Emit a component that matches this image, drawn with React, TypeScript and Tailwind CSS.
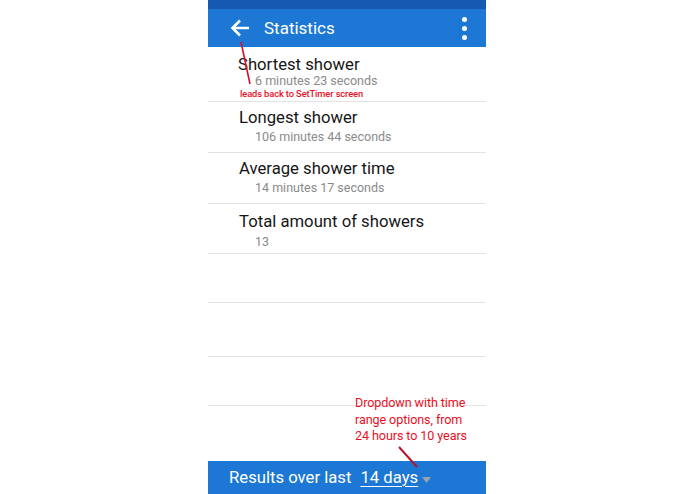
import React from "react";

type Stat = { title: string; value: string; h: number; pt: number; gap: number };

const stats: Stat[] = [
  { title: "Shortest shower", value: "6 minutes 23 seconds", h: 55, pt: 8, gap: -1 },
  { title: "Longest shower", value: "106 minutes 44 seconds", h: 51, pt: 6, gap: 2 },
  { title: "Average shower time", value: "14 minutes 17 seconds", h: 51, pt: 6, gap: 2 },
  { title: "Total amount of showers", value: "13", h: 50, pt: 8, gap: 3 },
];

const emptyRows = [49, 54, 49];

export default function App() {
  return (
    <div
      className="relative w-[695px] h-[494px] bg-white overflow-hidden"
      style={{ fontFamily: "Roboto, 'Noto Sans', sans-serif" }}
    >
      <div className="ml-[208px] w-[278px] h-[494px] flex flex-col">
        {/* status bar */}
        <div className="h-[9px] bg-[#1559b3]" />
        {/* app bar */}
        <div className="h-[38px] bg-[#1c78d4] flex items-center text-white">
          <svg width="20" height="18" viewBox="0 0 20 18" className="ml-[22px]" fill="none">
            <path d="M19 9H2.5M10 1.5L2.5 9l7.5 7.5" stroke="white" strokeWidth="2.6" strokeLinecap="butt" strokeLinejoin="miter" />
          </svg>
          <span className="ml-[14px] text-[17px] leading-none">Statistics</span>
          <div className="ml-auto mr-[19px] flex flex-col gap-[4px]">
            <span className="w-[5px] h-[5px] rounded-full bg-white" />
            <span className="w-[5px] h-[5px] rounded-full bg-white" />
            <span className="w-[5px] h-[5px] rounded-full bg-white" />
          </div>
        </div>

        {stats.map((s, i) => (
          <div
            key={s.title}
            className="border-b border-[#e3e3e3] flex flex-col"
            style={{ height: s.h, paddingTop: s.pt }}
          >
            <div
              className="text-[16.7px] leading-[20px] text-[#161616]"
              style={{ paddingLeft: i === 0 ? 30 : 31 }}
            >
              {s.title}
            </div>
            <div
              className="pl-[47px] text-[12.5px] leading-[13px] text-[#8a8a8a]"
              style={{ marginTop: s.gap }}
            >
              {s.value}
            </div>
          </div>
        ))}

        {emptyRows.map((h, i) => (
          <div key={i} className="border-b border-[#e3e3e3]" style={{ height: h }} />
        ))}

        <div className="flex-1" />

        {/* range selector */}
        <div className="h-[33px] bg-[#1c78d4] flex items-center text-white text-[16.7px]">
          <span className="ml-[21px]">Results over last</span>
          <span className="ml-[9px] underline underline-offset-[3px] decoration-1">14 days</span>
          <svg width="9" height="6" viewBox="0 0 9 6" className="ml-[4px] mt-[4px]">
            <path d="M0 0h9L4.5 6z" fill="#9aa3ad" />
          </svg>
        </div>
      </div>

      {/* annotation lines */}
      <svg className="absolute left-0 top-0" width="695" height="494" fill="none">
        <path d="M241 42L250 84" stroke="#d4122a" strokeWidth="1.6" />
        <path d="M399 447L417 467" stroke="#b8132c" strokeWidth="2" />
      </svg>
      <div className="absolute left-[240px] top-[89px] text-[9.3px] leading-[9px] font-medium text-[#e8101f] tracking-[-0.1px]">
        leads back to SetTimer screen
      </div>

      <div className="absolute left-[355px] top-[395px] text-[12.6px] leading-[16.5px] text-[#e8101f] tracking-[-0.1px]">
        Dropdown with time
        <br />
        range options, from
        <br />
        24 hours to 10 years
      </div>
    </div>
  );
}
